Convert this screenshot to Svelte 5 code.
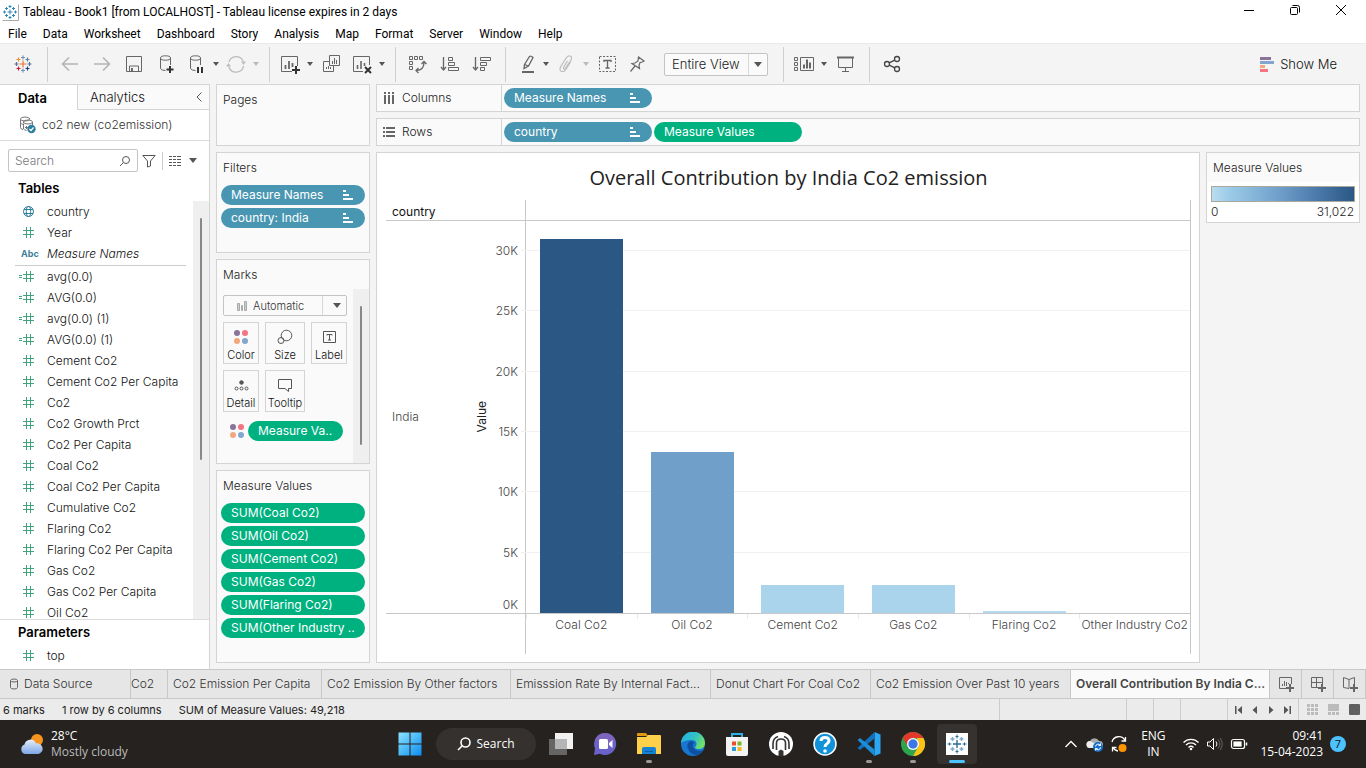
<script>
  const menus = ['File', 'Data', 'Worksheet', 'Dashboard', 'Story', 'Analysis', 'Map', 'Format', 'Server', 'Window', 'Help'];

  const dimensions = [
    { icon: 'globe', name: 'country' },
    { icon: 'hash', name: 'Year' },
    { icon: 'abc', name: 'Measure Names', italic: true }
  ];
  const measures = [
    ['calc', 'avg(0.0)'], ['calc', 'AVG(0.0)'], ['calc', 'avg(0.0) (1)'], ['calc', 'AVG(0.0) (1)'],
    ['hash', 'Cement Co2'], ['hash', 'Cement Co2 Per Capita'], ['hash', 'Co2'], ['hash', 'Co2 Growth Prct'],
    ['hash', 'Co2 Per Capita'], ['hash', 'Coal Co2'], ['hash', 'Coal Co2 Per Capita'], ['hash', 'Cumulative Co2'],
    ['hash', 'Flaring Co2'], ['hash', 'Flaring Co2 Per Capita'], ['hash', 'Gas Co2'], ['hash', 'Gas Co2 Per Capita'],
    ['hash', 'Oil Co2']
  ];
  const measureValues = ['SUM(Coal Co2)', 'SUM(Oil Co2)', 'SUM(Cement Co2)', 'SUM(Gas Co2)', 'SUM(Flaring Co2)', 'SUM(Other Industry ..'];

  const axisMax = 32500;
  const ticks = [30, 25, 20, 15, 10, 5, 0];
  const bars = [
    { name: 'Coal Co2', value: 31022, color: '#2a5783' },
    { name: 'Oil Co2', value: 13350, color: '#70a0ca' },
    { name: 'Cement Co2', value: 2340, color: '#aad3ec' },
    { name: 'Gas Co2', value: 2310, color: '#aad3ec' },
    { name: 'Flaring Co2', value: 196, color: '#b4daf0' },
    { name: 'Other Industry Co2', value: 0, color: '#b9ddf1' }
  ];

  const sheets = [
    { name: 'Co2', size: 'xs' },
    { name: 'Co2 Emission Per Capita', size: 'sm' },
    { name: 'Co2 Emission By Other factors', size: 'md' },
    { name: 'Emisssion Rate By Internal Fact...', size: 'lg' },
    { name: 'Donut Chart For Coal Co2', size: 'sm2' },
    { name: 'Co2 Emission Over Past 10 years', size: 'lg' },
    { name: 'Overall Contribution By India C...', size: 'lg', active: true }
  ];
</script>

{#snippet icon(name)}
  <svg class="ic" width="24" height="24" viewBox="0 0 24 24" fill="none" stroke="#666" aria-hidden="true">
    {#if name === 'logo'}
      <g stroke-width="1.2">
        <path d="M12 8.500v7M8.500 12h7" stroke="#e8762d" />
        <path d="M12 3.500v4M10 5.500h4M12 16.500v4M10 18.500h4" stroke="#7a93b8" />
        <path d="M5.500 10v4M3.500 12h4M18.500 10v4M16.500 12h4" stroke="#5b6fa0" />
        <path d="M7.500 5.500v4M5.500 7.500h4" stroke="#eb912c" />
        <path d="M16.500 5.500v4M14.500 7.500h4" stroke="#59879b" />
        <path d="M7.500 14.500v4M5.500 16.500h4" stroke="#c72035" />
        <path d="M16.500 14.500v4M14.500 16.500h4" stroke="#1f447e" />
      </g>
    {:else if name === 'back'}
      <path d="M20 12H5M11 5.500 4.500 12l6.500 6.500" stroke="#b4b4b4" stroke-width="1.600" />
    {:else if name === 'forward'}
      <path d="M4 12h15M13 5.500 19.500 12 13 18.500" stroke="#b4b4b4" stroke-width="1.600" />
    {:else if name === 'save'}
      <path d="M4.500 4.500h15v15h-15zM7.500 19v-5h9v5M10.500 19v-2" /><path d="M9 16h2v3H9z" fill="#666" stroke="none" />
    {:else if name === 'dbadd' || name === 'dbpause'}
      <path d="M6.500 6v10.500q1 2 5 2M16.500 6v7" /><ellipse cx="11.500" cy="6" rx="5" ry="2.200" />
      {#if name === 'dbadd'}
        <path d="M16 14v7M12.500 17.500h7" stroke="#333" stroke-width="2" />
      {:else}
        <path d="M14 15v6M18 15v6" stroke="#333" stroke-width="2" />
      {/if}
    {:else if name === 'refresh'}
      <path d="M5 10a7.500 7.500 0 0 1 14-1M19.500 14a7.500 7.500 0 0 1-14.500 1" stroke="#bbb" stroke-width="1.300" />
      <path d="M17 9.500h5L19.500 13zM2 14.500h5L4.500 11z" fill="#bbb" stroke="none" />
    {:else if name === 'newsheet'}
      <path d="M14 19.500H3.500v-15h16V14" /><path d="M7.500 17v-4M11 17V9M14.500 15v-4" stroke-width="1.800" />
      <path d="M18 14v8M14 18h8" stroke="#333" stroke-width="2" />
    {:else if name === 'duplicate'}
      <path d="M9.500 3.500h10v10h-10zM9 9.500H3.500v10h10V14M12.500 12V9M14.500 12V6M16.500 12V8M6.500 17v-2M8.500 17v-3M10.500 17v-2" />
    {:else if name === 'clear'}
      <path d="M13 19.500H3.500v-15h16V13" /><path d="M7.500 17v-4M11 17V9M14.500 14v-3" stroke-width="1.600" />
      <path d="m15 15 6 6M21 15l-6 6" stroke="#333" stroke-width="2" />
    {:else if name === 'swap'}
      <path d="M3.500 4.500h3v3h-3zM8.500 4.500h3v3h-3zM13.500 4.500h3v3h-3zM3.500 9.500h3v3h-3zM3.500 14.500h3v3h-3z" />
      <path d="M18 10.500q0 7.500-7.500 8M15.500 12l2.500-2.500 2.500 2.500M12.500 16l-2.500 2.500 2.500 2.500" stroke-width="1.300" />
    {:else if name === 'asc'}
      <path d="M5.500 5v13M3 15l2.500 3L8 15" stroke-width="1.300" /><path d="M10.500 5.500h4v3h-4zM10.500 10.500h6v3h-6zM10.500 15.500h10v3h-10z" />
    {:else if name === 'desc'}
      <path d="M5.500 5v13M3 15l2.500 3L8 15" stroke-width="1.300" /><path d="M10.500 5.500h10v3h-10zM10.500 10.500h6v3h-6zM10.500 15.500h4v3h-4z" />
    {:else if name === 'pen'}
      <path d="M8 20h12" stroke-width="2" /><path d="m10.500 12.500 5-8q1.500-1 3.500 1l-4.500 8.500-4.500 2.500zM10.500 12.500l4 1.500" stroke-width="1.300" />
    {:else if name === 'clip'}
      <path d="m13.500 9-4 6.500q-.5 2 1.500 1.500l6-9q1.500-3.500-1-4-2-.5-3.500 1.500l-6 9.500q-1.500 4 1.500 4.500 2 .5 3.500-1.500l5-8" stroke="#bbb" stroke-width="1.200" />
    {:else if name === 'label'}
      <path d="M3.500 4.500h16v15h-16z" stroke-dasharray="2 1.500" /><path d="M8 10V8.500h7V10M11.500 8v8M9.500 16h4" stroke-width="1.300" />
    {:else if name === 'pin'}
      <path d="m12.500 5 5.500 4-1.500 1-2.500.500-1 3 .500 3-7.500-5 3-.500 3-2zM9 14l-4.500 5.500" stroke-width="1.200" />
    {:else if name === 'cards'}
      <path d="M2.500 5.500h3v3h-3zM2.500 10.500h3v3h-3zM2.500 15.500h3v3h-3zM8.500 5.500h13v13h-13z" /><path d="M12 16.500v-4M15 16.500v-9M18 16.500v-6" stroke-width="2" />
    {:else if name === 'present'}
      <path d="M3 5.500h17" stroke-width="2" /><path d="M4.500 6v9.500h14V6M11.500 15v4M8 19.500h7" />
    {:else if name === 'share'}
      <g stroke="#444" stroke-width="1.300"><circle cx="7" cy="12" r="2.500" /><circle cx="17" cy="7" r="2.500" /><circle cx="17" cy="17" r="2.500" /><path d="m9.200 10.800 5.600-2.700M9.200 13.200l5.600 2.700" /></g>
    {/if}
  </svg>
{/snippet}

{#snippet tool(name, wide, label)}
  <button class="tool" class:wide aria-label={label}>{@render icon(name)}</button>
{/snippet}

{#snippet caret(dim)}
  <button class="caret" class:dim aria-label="Options"><i></i></button>
{/snippet}

{#snippet fieldIcon(kind)}
  <svg class="fi" width="16" height="17" viewBox="0 0 16 17" fill="none" aria-hidden="true">
    {#if kind === 'globe'}
      <g stroke="#2e7ea0"><circle cx="8.500" cy="8.500" r="5" /><ellipse cx="8.500" cy="8.500" rx="2.200" ry="5" /><path d="M4 6.500h9M4 10.500h9" /></g>
    {:else if kind === 'abc'}
      <text x="1" y="12" font-size="9" font-weight="700" fill="#3b7f9c">Abc</text>
    {:else}
      <path d="M6.500 3v11M10.500 3v11M3 6.500h11M3 10.500h11" stroke="#3fa37c" />
      {#if kind === 'calc'}<path d="M-1 7.500h3M-1 9.500h3" stroke="#3fa37c" />{/if}
    {/if}
  </svg>
{/snippet}

{#snippet pill(text, tone, sorted)}
  <button class="pill {tone}">
    <span>{text}</span>
    {#if sorted}
      <svg width="10" height="10" viewBox="0 0 10 10" fill="#fff" aria-hidden="true"><path d="M0 0h3v2H0zM0 4h6v2H0zM0 8h10v2H0z" /></svg>
    {/if}
  </button>
{/snippet}

{#snippet dots()}
  <svg width="16" height="16" viewBox="0 0 16 16" aria-hidden="true">
    <circle cx="4" cy="4" r="3" fill="#8a739b" /><circle cx="12" cy="4" r="3" fill="#f6747f" />
    <circle cx="4" cy="12" r="3" fill="#f2a77f" /><circle cx="12" cy="12" r="3" fill="#82a6d0" />
  </svg>
{/snippet}

<div class="app">
  <header class="titlebar">
    <svg width="17" height="17" viewBox="0 0 17 17" fill="none" aria-hidden="true">
      <path d="M.5 16.500h16V.500" stroke="#aaa" />
      <g stroke="#2f86b5"><path d="M8 5.500v5M5.500 8h5M8 1v3M6.500 2.500h3M8 12v3M6.500 13.500h3M2.500 6.500v3M1 8h3M13.500 6.500v3M12 8h3M4.500 3v3M3 4.500h3M11.500 3v3M10 4.500h3M4.500 10v3M3 11.500h3M11.500 10v3M10 11.500h3" /></g>
    </svg>
    <span>Tableau - Book1 [from LOCALHOST] - Tableau license expires in 2 days</span>
    <div class="winbtns">
      <button aria-label="Minimize"><svg width="12" height="12" viewBox="0 0 12 12" stroke="#000"><path d="M1 6.500h10" /></svg></button>
      <button aria-label="Restore"><svg width="12" height="12" viewBox="0 0 12 12" stroke="#000" fill="none"><rect x="1.500" y="3.500" width="7" height="7" rx="1" /><path d="M3.500 1.500h5q2 0 2 2v5" /></svg></button>
      <button aria-label="Close"><svg width="12" height="12" viewBox="0 0 12 12" stroke="#000"><path d="m1 1 10 10M11 1 1 11" /></svg></button>
    </div>
  </header>

  <nav class="menubar">
    {#each menus as m}<button>{m}</button>{/each}
  </nav>

  <div class="toolbar">
    <button class="tool home" aria-label="Start page">{@render icon('logo')}</button>
    <hr />
    {@render tool('back', true, 'Undo')}
    {@render tool('forward', true, 'Redo')}
    {@render tool('save', true, 'Save')}
    {@render tool('dbadd', true, 'New data source')}
    {@render tool('dbpause', false, 'Pause auto updates')}
    {@render caret(false)}
    {@render tool('refresh', false, 'Run update')}
    {@render caret(true)}
    <hr />
    {@render tool('newsheet', false, 'New worksheet')}
    {@render caret(false)}
    {@render tool('duplicate', true, 'Duplicate')}
    {@render tool('clear', false, 'Clear sheet')}
    {@render caret(false)}
    <hr />
    {@render tool('swap', true, 'Swap rows and columns')}
    {@render tool('asc', true, 'Sort ascending')}
    {@render tool('desc', true, 'Sort descending')}
    <hr />
    {@render tool('pen', false, 'Highlight')}
    {@render caret(false)}
    {@render tool('clip', false, 'Group members')}
    {@render caret(true)}
    {@render tool('label', true, 'Show mark labels')}
    {@render tool('pin', false, 'Fix axes')}
    <div class="selectbox fit">
      <select aria-label="Fit"><option>Entire View</option></select><i></i>
    </div>
    <hr />
    {@render tool('cards', false, 'Show or hide cards')}
    {@render caret(false)}
    {@render tool('present', true, 'Presentation mode')}
    <hr />
    {@render tool('share', true, 'Share')}
    <button class="showme">
      <svg width="14" height="15" viewBox="0 0 14 15" aria-hidden="true"><path d="M0 0h11v3H0z" fill="#8a739b" /><path d="M0 4h14v3H0z" fill="#82a6d0" /><path d="M0 8h5v3H0z" fill="#f2a77f" /><path d="M0 12h8v3H0z" fill="#f6747f" /></svg>
      Show Me
    </button>
  </div>

  <main class="workspace">
    <aside class="data">
      <div class="datatabs">
        <button class="on">Data</button>
        <button class="off">Analytics
          <svg width="8" height="12" viewBox="0 0 8 12" fill="none" stroke="#555"><path d="M6.500 1.500 2 6l4.500 4.500" /></svg>
        </button>
      </div>
      <button class="source">
        <svg width="18" height="18" viewBox="0 0 18 18" fill="none" stroke="#777" aria-hidden="true">
          <path d="M4 13.500q-2.500-.5-2.500-2v-8M10.500 2v1" /><ellipse cx="6" cy="3" rx="4.500" ry="2" /><path d="M4.500 7.500v-2M13.500 6v4M4.500 8v5q1 1 3 1.500M1.500 7q1 1 3 1.500" /><ellipse cx="9" cy="6" rx="4.500" ry="2" /><path d="M6 11.500h3M7.500 10v3" />
          <circle cx="12.500" cy="13" r="4.200" fill="#2e7ea0" stroke="none" /><path d="m10.500 13 1.500 1.500 2.500-3" stroke="#fff" stroke-width="1.200" />
        </svg>
        co2 new (co2emission)
      </button>
      <div class="searchrow">
        <label class="search">
          <input type="text" placeholder="Search" aria-label="Search fields" />
          <svg width="12" height="12" viewBox="0 0 12 12" fill="none" stroke="#555" aria-hidden="true"><circle cx="7" cy="5" r="3.500" /><path d="M4.500 7.500 1 11" /></svg>
        </label>
        <button aria-label="Filter fields"><svg width="14" height="14" viewBox="0 0 14 14" fill="none" stroke="#555"><path d="M.8 1.500h12.400L8.500 7v5l-3 1V7z" /></svg></button>
        <span class="bar"></span>
        <button class="view" aria-label="View options">
          <svg width="12" height="10" viewBox="0 0 12 10" stroke="#555"><path d="M0 .5h3m1 0h3m1 0h4M0 3.500h3m1 0h3m1 0h4M0 6.500h3m1 0h3m1 0h4M0 9.500h3m1 0h3m1 0h4" /></svg>
          <i></i>
        </button>
      </div>
      <h2>Tables</h2>
      <div class="fields">
        <ul>
          {#each dimensions as d}
            <li>{@render fieldIcon(d.icon)}<span class:italic={d.italic}>{d.name}</span></li>
          {/each}
          <li class="rule"></li>
          {#each measures as [kind, name]}
            <li>{@render fieldIcon(kind)}<span>{name}</span></li>
          {/each}
        </ul>
        <div class="track"><span></span></div>
      </div>
      <section class="params">
        <h2>Parameters</h2>
        <ul><li>{@render fieldIcon('hash')}<span>top</span></li></ul>
      </section>
    </aside>

    <div class="cards">
      <section class="card pages"><h3>Pages</h3></section>
      <section class="card filters">
        <h3>Filters</h3>
        <div class="pills">{@render pill('Measure Names', 'blue', true)}{@render pill('country: India', 'blue', true)}</div>
      </section>
      <section class="card marks">
        <h3>Marks</h3>
        <div class="marksbody">
          <div class="markscontent">
            <div class="selectbox type">
              <svg width="12" height="12" viewBox="0 0 12 12" fill="#ccc" stroke="#aaa" aria-hidden="true"><path d="M1.500 3.500h2v7h-2zM5.500 5.500h1v5h-1zM8.500 1.500h2v9h-2z" /></svg>
              <select aria-label="Mark type"><option>Automatic</option></select><i></i>
            </div>
            <div class="encs">
              <button>{@render dots()}Color</button>
              <button><svg width="16" height="16" viewBox="0 0 16 16" fill="none" stroke="#555"><circle cx="9.500" cy="6.500" r="5.300" /><circle cx="4" cy="11.500" r="3" /></svg>Size</button>
              <button><svg width="16" height="16" viewBox="0 0 16 16" fill="none" stroke="#555"><path d="M2.500 2.500h12v11h-12zM6 6.500v-1h5v1M8.500 5v6M7 11h3" /></svg>Label</button>
              <button><svg width="16" height="16" viewBox="0 0 16 16" fill="none" stroke="#555"><circle cx="8.500" cy="5.500" r="1.800" fill="#555" /><circle cx="3.500" cy="11.500" r="1.500" /><circle cx="8.500" cy="11.500" r="1.500" /><circle cx="13.500" cy="11.500" r="1.500" /></svg>Detail</button>
              <button><svg width="16" height="16" viewBox="0 0 16 16" fill="none" stroke="#555"><path d="M1.500 2.500h13v9h-3v3l-3.500-3H1.500z" /></svg>Tooltip</button>
            </div>
            <div class="encoded">{@render dots()}{@render pill('Measure Va..', 'green', false)}</div>
          </div>
          <div class="track"><span></span></div>
        </div>
      </section>
      <section class="card values">
        <h3>Measure Values</h3>
        <div class="pills">{#each measureValues as v}{@render pill(v, 'green', false)}{/each}</div>
      </section>
    </div>

    <div class="sheet">
      <div class="shelf">
        <div class="shelfname">
          <svg width="12" height="12" viewBox="0 0 12 12" fill="#666" aria-hidden="true"><path d="M1 0h2v2H1zM5 0h2v2H5zM9 0h2v2H9zM1 3h2v9H1zM5 3h2v9H5zM9 3h2v9H9z" /></svg>Columns
        </div>
        {@render pill('Measure Names', 'blue', true)}
      </div>
      <div class="shelf">
        <div class="shelfname">
          <svg width="12" height="12" viewBox="0 0 12 12" fill="#666" aria-hidden="true"><path d="M0 1h2v2H0zM0 5h2v2H0zM0 9h2v2H0zM3 1h9v2H3zM3 5h9v2H3zM3 9h9v2H3z" /></svg>Rows
        </div>
        {@render pill('country', 'blue', true)}{@render pill('Measure Values', 'green', false)}
      </div>
      <div class="lower">
        <section class="viz">
          <h1>Overall Contribution by India Co2 emission</h1>
          <div class="chart">
            <div class="colhead">country</div><div class="tophead"></div>
            <div class="rowhead">
              <span class="member">India</span>
              <span class="axistitle">Value</span>
              <div class="axis">
                {#each ticks as t}<span class:zero={t === 0} style="bottom:{(t * 100000) / axisMax}%">{t}K</span>{/each}
              </div>
            </div>
            <div class="plot">
              {#each ticks as t}{#if t}<div class="grid" style="bottom:{(t * 100000) / axisMax}%"></div>{/if}{/each}
              {#each bars as b}<div class="slot"><div class="mark" style="height:{(b.value * 100) / axisMax}%;background:{b.color}"></div></div>{/each}
            </div>
            <div class="footleft"></div>
            <div class="labels">{#each bars as b}<span>{b.name}</span>{/each}</div>
          </div>
        </section>
        <section class="legend">
          <h3>Measure Values</h3>
          <div class="ramp"></div>
          <div class="range"><span>0</span><span>31,022</span></div>
        </section>
      </div>
    </div>
  </main>

  <nav class="tabs">
    <button class="tab src">
      <svg width="10" height="12" viewBox="0 0 10 12" fill="none" stroke="#666" aria-hidden="true"><path d="M1.500 2.500v7q0 1.500 3.500 1.500t3.500-1.500v-7" /><ellipse cx="5" cy="2.500" rx="3.500" ry="1.500" /></svg>
      Data Source
    </button>
    {#each sheets as s}<button class="tab {s.size}" class:active={s.active}>{s.name}</button>{/each}
    <button class="add" aria-label="New worksheet"><svg width="16" height="16" viewBox="0 0 16 16" fill="none" stroke="#666"><path d="M8 12.500H1.500v-11h12V8M4.500 10V8M6.500 10V5M8.500 10V6M10.500 8V7" /><path d="M12 8v8M8 12h8" stroke-width="2" /></svg></button>
    <button class="add" aria-label="New dashboard"><svg width="16" height="16" viewBox="0 0 16 16" fill="none" stroke="#666"><path d="M8 11.500H1.500v-10h11V8M1.500 6.500h11M6.500 1.500v10" /><path d="M12 8v8M8 12h8" stroke-width="2" /></svg></button>
    <button class="add" aria-label="New story"><svg width="16" height="16" viewBox="0 0 16 16" fill="none" stroke="#666"><path d="M7 12.500 1.500 11.500v-10L7 3.500l5.500-2V8M7 3.500v9" /><path d="M12 8v8M8 12h8" stroke-width="2" /></svg></button>
  </nav>

  <div class="status">
    <span>6 marks</span><span>1 row by 6 columns</span><span>SUM of Measure Values: 49,218</span>
    <div class="cells"><b class="w3"></b><b></b><b></b><b class="w2"></b></div>
    <div class="pager">
      <button aria-label="First"><svg width="8" height="8" viewBox="0 0 8 8" fill="#555"><path d="M0 0h1.500v8H0zM7 0v8L2.500 4z" /></svg></button>
      <button aria-label="Previous"><svg width="8" height="8" viewBox="0 0 8 8" fill="#555"><path d="M6 0v8L1.500 4z" /></svg></button>
      <button aria-label="Next"><svg width="8" height="8" viewBox="0 0 8 8" fill="#555"><path d="M2 0v8l4.500-4z" /></svg></button>
      <button aria-label="Last"><svg width="8" height="8" viewBox="0 0 8 8" fill="#555"><path d="M6.500 0H8v8H6.500zM1 0v8l4.500-4z" /></svg></button>
    </div>
    <div class="modes">
      <button aria-label="Sheet sorter"><svg width="11" height="11" viewBox="0 0 11 11" fill="#bbb"><path d="M0 0h3v3H0zM4 0h3v3H4zM8 0h3v3H8zM0 4h3v3H0zM4 4h3v3H4zM8 4h3v3H8zM0 8h3v3H0zM4 8h3v3H4zM8 8h3v3H8z" /></svg></button>
      <button aria-label="Filmstrip"><svg width="11" height="11" viewBox="0 0 11 11" fill="#bbb"><path d="M0 0h11v7H0zM0 8h3v3H0zM4 8h3v3H4zM8 8h3v3H8z" /></svg></button>
      <button aria-label="Tabs"><svg width="11" height="11" viewBox="0 0 11 11" fill="#606060"><rect width="11" height="11" rx="1" /></svg></button>
    </div>
  </div>

  <footer class="taskbar">
    <button class="weather">
      <svg width="26" height="24" viewBox="0 0 26 24" aria-hidden="true">
        <defs><linearGradient id="cloud" x1="0" y1="0" x2="0" y2="1"><stop offset="0" stop-color="#e4eefc" /><stop offset="1" stop-color="#7ea6e6" /></linearGradient></defs>
        <circle cx="18" cy="8" r="6" fill="#f7941d" /><path d="M6 22a5 5 0 0 1-.5-9.500A6 6 0 0 1 17 11.500a5.300 5.300 0 0 1 2.500 10.500z" fill="url(#cloud)" />
      </svg>
      <span><b>28°C</b><small>Mostly cloudy</small></span>
    </button>

    <div class="apps">
      <button aria-label="Start"><svg width="24" height="24" viewBox="0 0 24 24"><defs><linearGradient id="win" x1="0" y1="0" x2="1" y2="1"><stop offset="0" stop-color="#8be4ff" /><stop offset="1" stop-color="#0c8df0" /></linearGradient></defs><path d="M.5.500h11v11H.500zM12.500.500h11v11h-11zM.5 12.500h11v11H.500zM12.500 12.500h11v11h-11z" fill="url(#win)" /></svg></button>
      <button class="find"><svg width="14" height="14" viewBox="0 0 14 14" fill="none" stroke="#fff" stroke-width="1.600" aria-hidden="true"><circle cx="8.500" cy="5.500" r="4.500" /><path d="M5.500 8.500 1 13" /></svg>Search</button>
      <button aria-label="Task view"><svg width="24" height="24" viewBox="0 0 24 24"><path d="M6 1h18v16H6z" fill="#f1f1f1" /><path d="M0 7h18v16H0z" fill="#6d6d6d" opacity=".9" /><path d="M6 7h12v10H6z" fill="#b5b5b5" /></svg></button>
      <button aria-label="Chat"><svg width="24" height="24" viewBox="0 0 24 24"><path d="M12 1a11 11 0 1 1-5 20.700L1 23l1-6.500A11 11 0 0 1 12 1z" fill="#6a62c8" /><path d="M12 1a11 11 0 0 1 10.500 8Q12 14 2 8A11 11 0 0 1 12 1z" fill="#8a67b5" opacity=".6" /><rect x="6" y="7" width="9" height="10" rx="1.500" fill="#fff" /><path d="m16 11 3.500-3v8L16 13z" fill="#fff" /></svg></button>
      <button class="run" aria-label="File Explorer"><svg width="24" height="24" viewBox="0 0 24 24"><path d="M0 2q0-1 1-1h8l2 3H0z" fill="#e09a10" /><path d="M0 5h9l2-2h12q1 0 1 1v18H0z" fill="#ffd04a" /><path d="M5 22v-5q0-2 2-2h10q2 0 2 2v5z" fill="#1583d3" /><path d="M8 19h8v1H8z" fill="#0b5da5" /></svg></button>
      <button aria-label="Edge"><svg width="24" height="24" viewBox="0 0 24 24"><defs><linearGradient id="edge" x1="0" y1="0" x2="1" y2=".5"><stop offset="0" stop-color="#1fb0e6" /><stop offset=".6" stop-color="#35c1c4" /><stop offset="1" stop-color="#6fe06a" /></linearGradient></defs><circle cx="12" cy="12" r="12" fill="#1976d0" /><path d="M0 11A12 12 0 0 1 24 12q-1 5-6 5-4 0-4-2 1.500-1 1.500-3 0-4-5-4Q3 8 0 11z" fill="url(#edge)" /><path d="M9 9q-4 3-2 8 3 6 9 6 4-1 6.500-5-4 2-8 0-4-3-2.500-6 1-1 1.500-1Q12 9 9 9z" fill="#0d4fa0" /></svg></button>
      <button aria-label="Store"><svg width="24" height="24" viewBox="0 0 24 24"><path d="M7 6V2h10v4" fill="none" stroke="#2bb0ea" stroke-width="2" /><path d="M1 5h22v17q0 2-2 2H3q-2 0-2-2z" fill="#f3f3f3" /><path d="M7 9.500h4v4H7z" fill="#e8502a" /><path d="M12.500 9.500h4v4h-4z" fill="#7fb52b" /><path d="M7 15h4v4H7z" fill="#2b9be0" /><path d="M12.500 15h4v4h-4z" fill="#f8b81c" /></svg></button>
      <button aria-label="Assistant"><svg width="24" height="24" viewBox="0 0 24 24" fill="none"><circle cx="12" cy="12" r="12" fill="#fff" /><path d="M4 17v-5Q4 6 9 4.500M20 17v-5q0-6-5-7.500M7.500 18v-7q0-4 4.500-4t4.500 4v7" stroke="#333" stroke-width="1.600" /><path d="M9.500 24v-5l2.500-1.500 2.500 1.500v5z" fill="#333" /></svg></button>
      <button aria-label="Help"><svg width="24" height="24" viewBox="0 0 24 24" fill="none"><circle cx="12" cy="12" r="11" fill="#1193da" stroke="#fff" stroke-width="1.500" /><path d="M8 9q0-3.500 4-3.500t4 3.300q0 1.700-2 2.900T12 15" stroke="#fff" stroke-width="3" /><circle cx="12" cy="19" r="1.800" fill="#fff" /></svg></button>
      <button class="run" aria-label="Code editor"><svg width="24" height="24" viewBox="0 0 24 24"><path d="m17.500 0 6 2.500v19l-6 2.500z" fill="#2aa6f2" /><path d="M17.500 0v6.500L3 18l-2.500-2L17.500 0z" fill="#1272bd" /><path d="M17.500 24v-6.500L3 6 .500 8 17.500 24z" fill="#1b8ddb" /></svg></button>
      <button class="run" aria-label="Chrome"><svg width="24" height="24" viewBox="0 0 24 24"><circle cx="12" cy="12" r="12" fill="#2ea44f" /><path d="M1.600 6A12 12 0 0 1 22.400 6H12L7 14.500z" fill="#e0392c" /><path d="M22.400 6A12 12 0 0 1 12 24l5.200-9L16 6z" fill="#fbc116" /><circle cx="12" cy="12" r="6" fill="#fff" /><circle cx="12" cy="12" r="4.700" fill="#3b78e7" /></svg></button>
      <button class="current" aria-label="Tableau"><svg width="22" height="22" viewBox="0 0 22 22" fill="none"><path d="M0 0h22v22H0z" fill="#fff" /><g stroke="#2a6d96"><path d="M11 7v8M7 11h8" stroke-width="1.400" /><path d="M11 1.500v4M9.500 3.500h3M11 16.500v4M9.500 18.500h3M3.500 9.500v3M1.500 11h4M18.500 9.500v3M16.500 11h4" /><path d="M6.500 4v4M4.500 6h4M15.500 4v4M13.500 6h4M6.500 14v4M4.500 16h4M15.500 14v4M13.500 16h4" stroke="#7fa9c9" stroke-width="1.400" /></g></svg></button>
    </div>

    <div class="tray">
      <button aria-label="Hidden icons"><svg width="14" height="14" viewBox="0 0 14 14" fill="none" stroke="#fff" stroke-width="1.300"><path d="m1.500 10 5.500-5.500L12.500 10" /></svg></button>
      <button aria-label="OneDrive"><svg width="18" height="16" viewBox="0 0 18 16" fill="none"><path d="M4 12a3.500 3.500 0 0 1 0-7 5 5 0 0 1 9 0 3.500 3.500 0 0 1 1 7z" fill="#aaa" /><path d="M4 12a3.500 3.500 0 0 1 0-7l6 3 4 4z" fill="#eee" /><circle cx="12" cy="11" r="5" fill="#1670c9" /><path d="M9.500 10.500a2.700 2.700 0 0 1 5-1M14.500 11.500a2.700 2.700 0 0 1-5 1M14.500 7.500v2h-2M9.500 14.500v-2h2" stroke="#fff" /></svg></button>
      <button aria-label="Windows Update"><svg width="18" height="18" viewBox="0 0 18 18" fill="none" stroke="#fff" stroke-width="1.300"><path d="M2 7a7 7 0 0 1 13-1.500M15.500 2v4h-4M2.500 16.500v-4h4M3 12.500q1.500 3 5 3.500" /><circle cx="12.500" cy="13" r="4" fill="#ff9500" stroke="none" /></svg></button>
      <span class="lang">ENG<br />IN</span>
      <button aria-label="Network"><svg width="18" height="14" viewBox="0 0 18 14" fill="none" stroke="#fff" stroke-width="1.400"><path d="M1.500 5.500a10.500 10.500 0 0 1 15 0M4 8a7 7 0 0 1 10 0M6.500 10.500a3.600 3.600 0 0 1 5 0" /><circle cx="9" cy="12" r="1.300" fill="#fff" stroke="none" /></svg></button>
      <button aria-label="Volume"><svg width="18" height="14" viewBox="0 0 18 14" fill="none" stroke="#fff"><path d="M1.500 5v4h2.500l3.500 3.500v-11L4 5z" /><path d="M10 4.500q2 2.500 0 5" /><path d="M12 2.500q3.500 4.500 0 9M14 1q4.500 6 0 12" stroke="#666" /></svg></button>
      <button aria-label="Battery"><svg width="18" height="12" viewBox="0 0 18 12" fill="none" stroke="#fff" stroke-width="1.200"><rect x="1.500" y="1.500" width="13" height="9" rx="2" /><rect x="4" y="4" width="7" height="4" fill="#fff" /><path d="M16.500 4.500v3" stroke-width="1.500" /></svg></button>
      <span class="clock">09:41<br />15-04-2023</span>
      <span class="badge">7</span>
    </div>
  </footer>
</div>

<style>
  :global(body) { margin: 0; background: #f4f4f4; }
  :global(#app) { min-height: 100vh; }
  .app { display: flex; flex-direction: column; min-height: 100vh; box-sizing: border-box; font: 12px/16px Inter, sans-serif; color: #333; overflow: hidden; }
  .app * { box-sizing: border-box; }
  button { border: 0; background: none; padding: 0; margin: 0; font: inherit; color: inherit; display: flex; align-items: center; justify-content: center; white-space: nowrap; }
  svg { flex: none; display: block; }
  h1, h2, h3, ul { margin: 0; padding: 0; list-style: none; }
  i { width: 0; height: 0; border: 4px solid transparent; border-top: 5px solid #555; border-bottom: 0; flex: none; }

  .titlebar { background: #fff; height: 24px; display: flex; align-items: center; gap: 4px; padding-left: 2px; font: 12px/16px Roboto, sans-serif; color: #000; }
  .winbtns { margin-left: auto; display: flex; align-self: stretch; padding: 0 2px 4px 0; }
  .winbtns button { width: 46px; }
  .menubar { background: #fff; height: 19px; display: flex; gap: 16px; padding-left: 8px; font: 12px/16px Roboto, sans-serif; color: #000; }

  .toolbar { height: 41px; display: flex; align-items: center; background: #f4f4f4; border-top: 1px solid #eaeaea; }
  .tool { width: 28px; height: 32px; }
  .tool.wide { width: 32px; }
  .tool.home { width: 40px; padding-left: 6px; }
  .caret { width: 12px; height: 32px; }
  .caret i { border-width: 4px 3px 0; }
  .caret.dim i { border-top-color: #bbb; }
  .toolbar hr { width: 1px; height: 35px; margin: 0 6px 0 7px; border: 0; background: #d0d0d0; }
  .selectbox { display: flex; align-items: center; border: 1px solid #c4c4c4; border-radius: 2px; background: #fafafa; }
  .selectbox select { appearance: none; border: 0; background: none; font: inherit; color: inherit; flex: 1; min-width: 0; padding: 0; align-self: stretch; border-right: 1px solid #d8d8d8; outline: 0; }
  .selectbox i { margin: 0 5px; }
  .fit { width: 104px; height: 23px; margin: 0 8px 0 12px; font-size: 13px; font-weight: 300; color: #222; padding-left: 7px; }
  .showme { margin-left: auto; margin-right: 29px; gap: 6px; font-size: 13px; font-weight: 300; color: #111; }

  .workspace { flex: 1; display: flex; min-height: 0; background: #f4f4f4; font-weight: 300; color: #111; }
  .data { width: 210px; background: #fff; border: 1px solid #d4d4d4; border-left: 0; border-bottom: 0; display: flex; flex-direction: column; flex: none; }
  .datatabs { display: flex; height: 25px; flex: none; }
  .datatabs .on { width: 77px; font-size: 13px; font-weight: 600; color: #000; padding-right: 12px; }
  .datatabs .off { flex: 1; background: #fafafa; border: 1px solid #d4d4d4; border-width: 0 0 1px 1px; font-size: 13px; justify-content: space-between; padding: 0 6px 0 12px; }
  .source { height: 31px; flex: none; border-bottom: 1px solid #dcdcdc; justify-content: flex-start; gap: 5px; padding-left: 19px; color: #333; }
  .searchrow { display: flex; align-items: center; height: 39px; flex: none; padding: 0 12px 0 8px; gap: 4px; }
  .search { display: flex; align-items: center; width: 130px; height: 23px; border: 1px solid #c4c4c4; border-radius: 2px; padding: 0 6px; flex: none; }
  .search input { border: 0; outline: 0; min-width: 0; flex: 1; font: inherit; padding: 0; background: none; }
  .search input::placeholder { color: #777; }
  .bar { width: 1px; height: 18px; background: #ccc; margin: 0 2px; flex: none; }
  .view { gap: 8px; }
  h2 { font-size: 13px; line-height: 16px; font-weight: 600; color: #000; padding-left: 18px; }
  .data > h2 { margin-bottom: 5px; }
  .fields { flex: 1 1 0; min-height: 0; display: flex; overflow: hidden; border-bottom: 1px solid #dcdcdc; }
  .data ul { flex: 1; }
  .data li { height: 21px; display: flex; align-items: center; gap: 11px; padding-left: 20px; }
  .data li.rule { height: 1px; margin: 1px 7px 0 15px; padding: 0; background: #ccc; }
  .fi { overflow: visible; }
  .italic { font-style: italic; }
  .track { width: 16px; background: #efefef; display: flex; justify-content: center; flex: none; }
  .track span { width: 2px; background: #888; border-radius: 1px; margin-top: 17px; height: 242px; }
  .params { height: 49px; flex: none; padding-top: 4px; }
  .params ul { margin-top: 5px; }

  .cards { width: 154px; margin: 0 6px; display: flex; flex-direction: column; gap: 6px; padding-bottom: 6px; flex: none; }
  .card, .legend { border: 1px solid #d4d4d4; background: #fafafa; }
  h3 { font-size: 12px; line-height: 16px; font-weight: 300; color: #222; padding: 7px 6px 0; }
  .pages { height: 62px; }
  .filters { height: 101px; }
  .marks { height: 205px; display: flex; flex-direction: column; }
  .values { flex: 1; }
  .pills { display: flex; flex-direction: column; gap: 3px; padding: 9px 4px 0; }
  .pill { height: 20px; border-radius: 10px; color: #fff; font-size: 12px; justify-content: space-between; padding: 0 12px 0 10px; font-weight: 400; min-width: 0; }
  .blue { background: #4996b2; }
  .green { background: #00b180; }
  .marksbody { flex: 1; display: flex; margin-top: 6px; }
  .markscontent { flex: 1; min-width: 0; padding: 6px 6px 0; }
  .type { height: 21px; font-size: 11px; color: #333; padding-left: 12px; gap: 5px; }
  .encs { display: grid; grid-template-columns: 36px 40px 36px; row-gap: 6px; margin-top: 6px; justify-content: space-between; }
  .encs button { height: 42px; flex-direction: column; gap: 4px; border: 1px solid #d4d4d4; font-size: 11px; line-height: 13px; padding-top: 4px; background: #fafafa; }
  .encoded { display: flex; align-items: center; gap: 3px; margin: 9px 4px 0 6px; }
  .encoded .pill { flex: 1; }
  .marks .track span { margin-top: 17px; height: 139px; }

  .sheet { flex: 1; min-width: 0; display: flex; flex-direction: column; gap: 6px; padding: 0 6px 6px 0; }
  .shelf { height: 28px; flex: none; border: 1px solid #d4d4d4; background: #fafafa; display: flex; align-items: center; gap: 2px; }
  .shelfname { width: 125px; align-self: stretch; border-right: 1px solid #d4d4d4; display: flex; align-items: center; gap: 7px; padding-left: 6px; color: #222; }
  .shelf .pill { width: 148px; }
  .lower { flex: 1; display: flex; gap: 6px; align-items: flex-start; }
  .viz { flex: 1; min-width: 0; align-self: stretch; background: #fff; border: 1px solid #d4d4d4; display: flex; flex-direction: column; padding: 11px 8px 8px 9px; }
  h1 { font: 400 20px/28px "Open Sans", sans-serif; text-align: center; color: #222; margin-bottom: 8px; }
  .chart { flex: 1; display: grid; grid-template: 21px 1fr 40px / 139px 1fr; color: #444; }
  .colhead { color: #111; border-bottom: 1px solid #c8c8c8; padding: 4px 0 0 6px; font-weight: 400; }
  .tophead { border: 1px solid #c8c8c8; border-top: 0; }
  .rowhead { display: flex; align-items: center; border-bottom: 1px solid #c8c8c8; }
  .member { padding-left: 6px; width: 88px; }
  .axistitle { writing-mode: vertical-rl; transform: rotate(180deg); color: #222; font-weight: 400; }
  .axis { position: relative; flex: 1; align-self: stretch; }
  .axis span { position: absolute; right: 7px; transform: translateY(50%); }
  .axis .zero { transform: none; }
  .plot { position: relative; display: flex; border: 1px solid #c8c8c8; border-top: 0; }
  .grid { position: absolute; left: -5px; right: 0; height: 1px; background: #f1f1f1; }
  .slot { flex: 1; display: flex; align-items: flex-end; justify-content: center; position: relative; }
  .mark { width: 75%; }
  .labels { display: flex; border: 1px solid #c8c8c8; border-width: 0 1px; }
  .labels span { flex: 1 1 0; text-align: center; white-space: nowrap; min-width: 0; padding-top: 3px; background: linear-gradient(#eaeaea, #eaeaea) left top / 1px 5px no-repeat; }
  .legend { width: 154px; height: 71px; background: #fff; }
  .legend h3 { height: 29px; background: #fafafa; }
  .ramp { margin: 4px 4px 0; height: 16px; border: 1px solid #a8a89c; background: linear-gradient(90deg, #b9ddf1, #9ccbe8 12%, #72a2cc 45%, #4a78a9 75%, #2a5783); }
  .range { display: flex; justify-content: space-between; padding: 2px 5px 0 4px; color: #222; }

  .tabs { display: flex; height: 30px; border-top: 1px solid #c8c8c8; border-bottom: 1px solid #c8c8c8; background: #e6e6e6; color: #333; font-weight: 300; flex: none; }
  .tab { border-right: 1px solid #c8c8c8; padding: 0 5px; justify-content: flex-start; overflow: hidden; flex: 0 0 auto; }
  .src { width: 131px; gap: 5px; padding-left: 9px; }
  .xs { width: 37px; padding: 0; }
  .sm { width: 154px; }
  .md { width: 189px; }
  .sm2 { width: 160px; }
  .lg { width: 200px; }
  .tab.active { background: #fafafa; color: #444; font-weight: 600; width: 199px; }
  .add { flex: 1 1 32px; border-right: 1px solid #c8c8c8; }
  .status { display: flex; height: 21px; background: #ebebeb; font-size: 11px; padding-left: 3px; gap: 17px; align-items: center; flex: none; color: #222; }
  .cells { display: flex; margin-left: auto; align-self: stretch; }
  .cells b { width: 27px; border-left: 1px solid #ccc; }
  .cells .w2 { width: 47px; }
  .cells .w3 { width: 127px; }
  .pager, .modes { display: flex; align-self: stretch; border-left: 1px solid #ccc; padding: 0 3px; margin-left: -17px; }
  .pager button { width: 16px; }
  .modes { padding-right: 1px; }
  .modes button { width: 21px; }

  .taskbar { height: 48px; background: #25221f; display: grid; grid-template-columns: 1fr auto 1fr; color: #fff; font: 12px/16px "Open Sans", sans-serif; flex: none; }
  .weather { justify-self: start; padding-left: 19px; gap: 6px; text-align: left; }
  .weather b, .weather small { display: block; font-weight: 400; font-size: 12px; }
  .weather small { color: #bbb; }
  .apps { display: flex; align-items: center; }
  .apps button { width: 44px; height: 48px; position: relative; }
  .apps .find { width: 100px; height: 32px; margin: 0 3px 0 4px; border-radius: 16px; background: #35312e; gap: 6px; }
  .run::after, .current::after { content: ""; position: absolute; bottom: 5px; left: 19px; width: 6px; height: 3px; border-radius: 2px; background: #999; }
  .apps .current { width: 40px; height: 40px; background: #35322f; border-radius: 4px; margin: 0 2px; }
  .current::after { width: 16px; left: 12px; bottom: 1px; background: #4cc2ff; }
  .tray { justify-self: end; display: flex; align-items: center; padding-right: 20px; }
  .tray button { width: 24px; }
  .lang { text-align: center; width: 44px; margin-right: 4px; }
  .clock { text-align: right; margin-left: 9px; font-size: 12px; }
  .badge { width: 16px; height: 16px; border-radius: 8px; background: #4cc2ff; color: #111; text-align: center; margin-left: 7px; font-size: 11px; }
</style>
